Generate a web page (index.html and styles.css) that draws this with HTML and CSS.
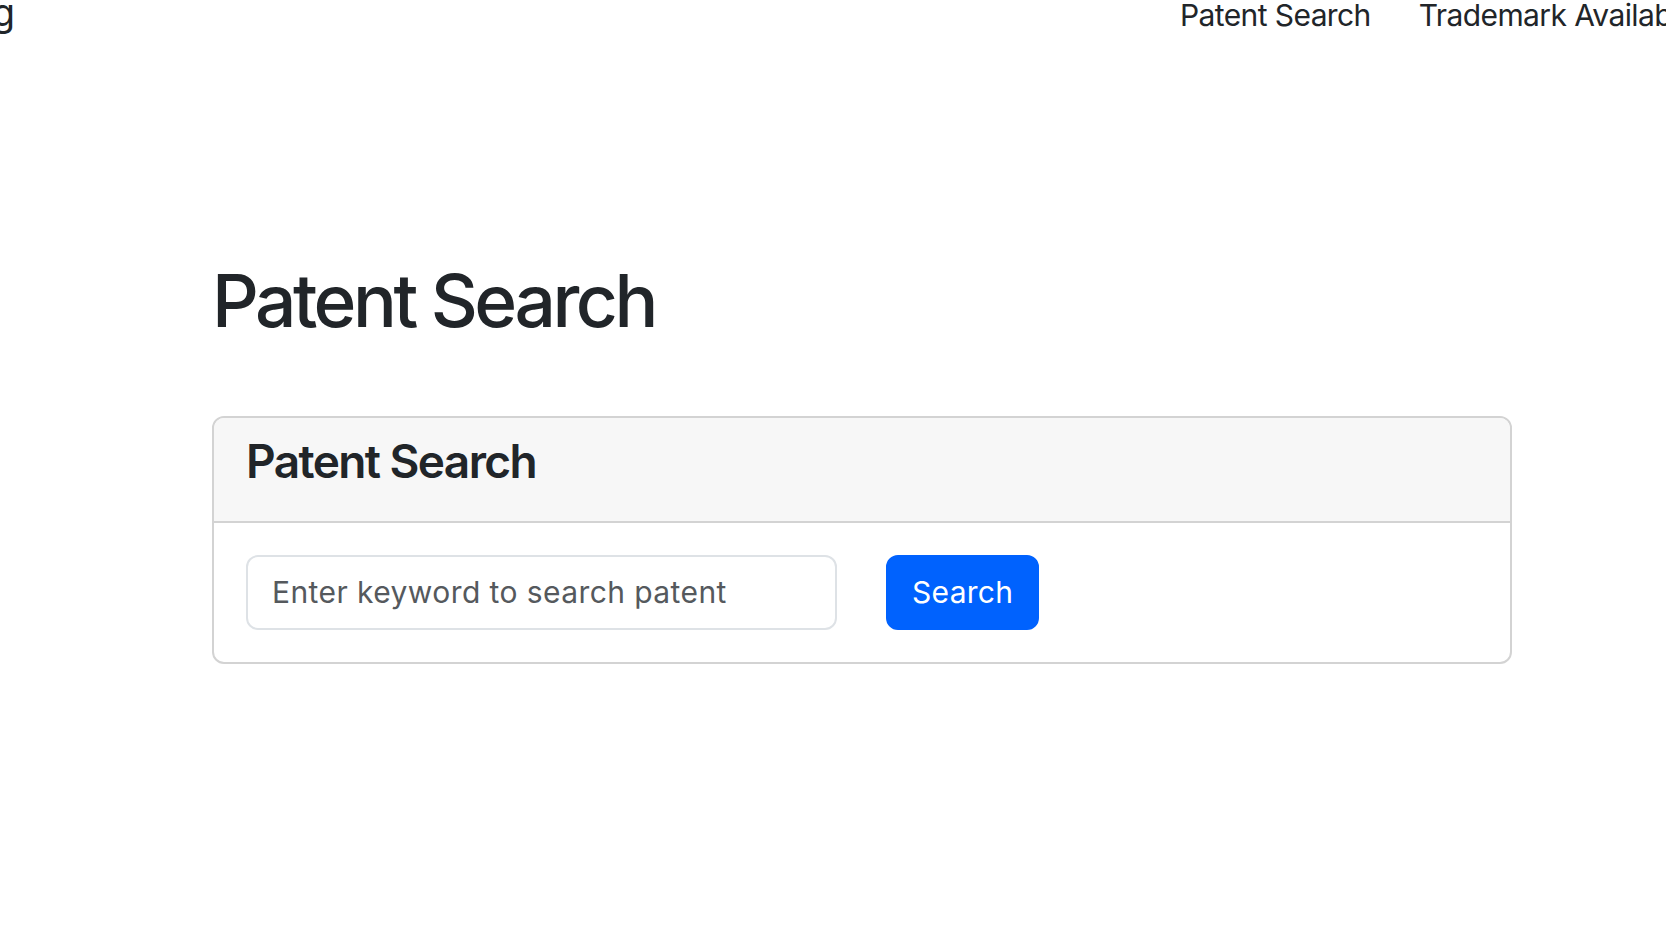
FILE: index.html
```html
<!DOCTYPE html>
<html lang="en">
<head>
<meta charset="utf-8">
<title>Patent Search</title>
<link rel="stylesheet" href="styles.css">
</head>
<body>
<nav class="topnav">
  <div class="brand"><span>g</span></div>
  <ul class="links">
    <li><a href="#">Patent Search</a></li>
    <li><a href="#">Trademark Availability</a></li>
  </ul>
</nav>
<main class="container">
  <h1 class="page-title">Patent Search</h1>
  <section class="card">
    <div class="card-header">
      <h4 class="card-title">Patent Search</h4>
    </div>
    <div class="card-body">
      <form class="search-row">
        <input class="search-input" type="text" placeholder="Enter keyword to search patent">
        <button class="search-btn" type="button">Search</button>
      </form>
    </div>
  </section>
</main>
</body>
</html>
```
FILE: styles.css
```css
html, body {
  margin: 0;
  padding: 0;
  background: #ffffff;
  overflow: hidden;
}
body {
  font-family: Inter, "Noto Sans", "Liberation Sans", sans-serif;
  color: #212529;
  width: 1666px;
  height: 948px;
}
.topnav {
  display: flex;
  align-items: flex-start;
  height: 40px;
  white-space: nowrap;
}
.brand {
  width: 15px;
  display: flex;
  justify-content: flex-end;
  font-size: 38px;
  line-height: 24px;
  color: #212529;
}
.links {
  list-style: none;
  display: flex;
  margin: 0 0 0 1165px;
  padding: 0;
  gap: 48px;
}
.links a {
  color: #212529;
  text-decoration: none;
  font-size: 30px;
  line-height: 30px;
  letter-spacing: -0.6px;
  display: block;
}
.container {
  padding-left: 212px;
  width: 1300px;
}
.page-title {
  font-size: 73px;
  font-weight: 500;
  line-height: 1.2;
  margin: 217px 0 71px 0;
  letter-spacing: -3.5px;
}
.card {
  border: 2px solid #d3d3d3;
  border-radius: 12px;
  overflow: hidden;
}
.card-header {
  background: #f7f7f7;
  border-bottom: 2px solid #d3d3d3;
  padding: 16px 32px 16px 32px;
}
.card-title {
  margin: 0 0 16px 0;
  font-size: 46px;
  font-weight: 600;
  line-height: 1.2;
  letter-spacing: -1.6px;
}
.card-body {
  padding: 32px;
}
.search-row {
  display: flex;
  align-items: center;
  gap: 49px;
  margin: 0;
}
.search-input {
  box-sizing: border-box;
  width: 591px;
  height: 75px;
  border: 2px solid #dee2e6;
  border-radius: 12px;
  padding: 0 24px;
  font-family: inherit;
  font-size: 30px;
  letter-spacing: 0.42px;
  color: #212529;
  background: #fff;
  outline: none;
}
.search-input::placeholder {
  color: #55595d;
}
.search-btn {
  box-sizing: border-box;
  height: 75px;
  padding: 0 24px;
  border: 2px solid #0062fe;
  border-radius: 12px;
  background: #0062fe;
  color: #ffffff;
  font-family: inherit;
  font-size: 30px;
  letter-spacing: 0.3px;
  font-weight: 400;
}
```
